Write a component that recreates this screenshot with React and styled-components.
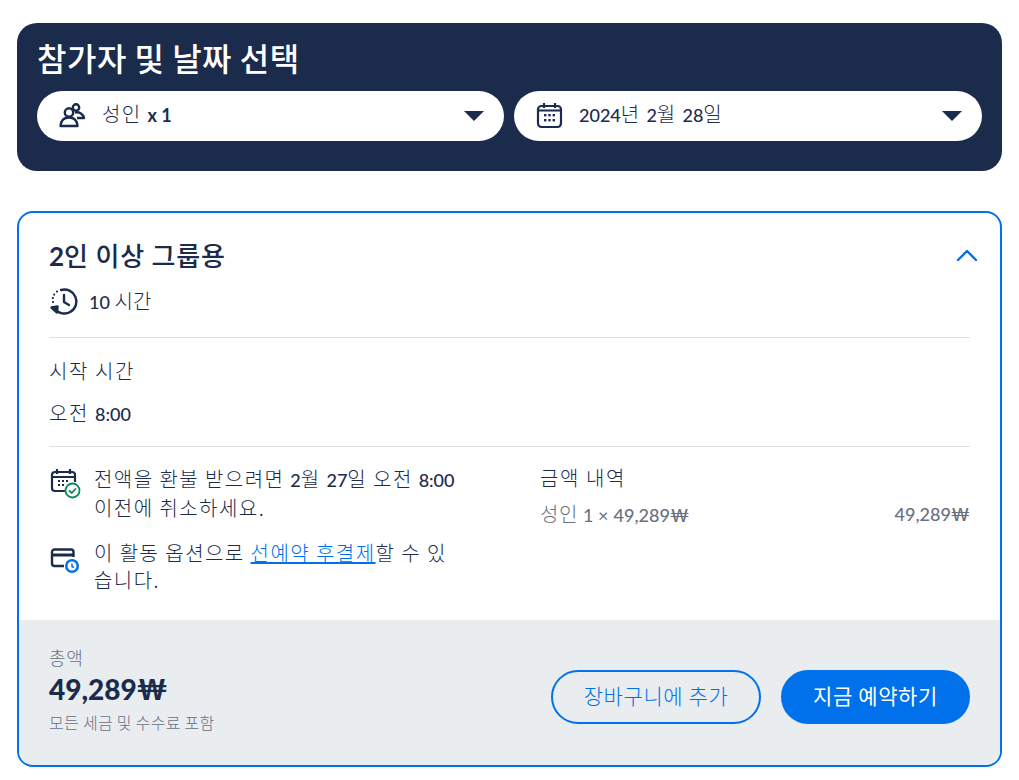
import React from "react";
import styled, { createGlobalStyle } from "styled-components";

const Global = createGlobalStyle`
  html, body { margin: 0; padding: 0; background: #fff; }
  body { font-family: "Noto Sans CJK KR", Lato, sans-serif; color: #1b2b4b; }
  * { box-sizing: border-box; }
`;
const Page = styled.div`
  padding: 23px 17px 0;
  display: flex;
  flex-direction: column;
  gap: 40px;
`;
const Num = styled.span`
  font-family: Lato, sans-serif;
  font-size: ${p => p.$size || 18}px;
  font-weight: ${p => p.$weight || 500};
  letter-spacing: 0;
`;
const Header = styled.section`
  height: 148px;
  background: #1b2b4b;
  border-radius: 20px;
  padding: 14px 20px 30px;
  display: flex;
  flex-direction: column;
`;
const Title = styled.h2`
  margin: 0;
  font-size: 32px;
  letter-spacing: 0.5px;
  line-height: 40px;
  height: 54px;
  font-weight: 500;
  color: #fff;
`;
const Selectors = styled.div`
  display: grid;
  grid-template-columns: 467px 468px;
  gap: 10px;
`;
const Pill = styled.div`
  height: 50px;
  background: #fff;
  border-radius: 25px;
  display: flex;
  align-items: center;
  padding: 0 20px 4px 21px;
  font-size: 20px;
  letter-spacing: 1.4px;
  font-weight: 300;
  color: #1b2b4b;
`;
const PillIcon = styled.svg`
  width: 28px;
  height: 28px;
  flex: none;
  margin-right: 16px;
  margin-top: 2px;
`;
const PillText = styled.span`
  flex: 1;
  line-height: 26px;
`;
const Caret = styled.span`
  width: 0;
  height: 0;
  border-left: 10px solid transparent;
  border-right: 10px solid transparent;
  border-top: 10px solid #1b2b4b;
  margin-top: 4px;
`;
const Card = styled.section`
  height: 556px;
  border: 2px solid #0070eb;
  border-radius: 16px;
  overflow: hidden;
  display: flex;
  flex-direction: column;
`;
const Body = styled.div`
  flex: 1;
  padding: 24px 30px 0;
  display: flex;
  flex-direction: column;
  font-weight: 300;
`;
const TitleRow = styled.div`
  display: flex;
  align-items: center;
  justify-content: space-between;
  height: 36px;
`;
const CardTitle = styled.h3`
  margin: 0;
  font-size: 26px;
  letter-spacing: 0.8px;
  line-height: 36px;
  font-weight: 500;
`;
const Chevron = styled.svg`
  margin: 0 -8px 0 0;
`;
const Duration = styled.div`
  display: flex;
  align-items: center;
  gap: 10px;
  height: 36px;
  margin-top: 10px;
  font-size: 20px;
  letter-spacing: 0.2px;
  line-height: 26px;
`;
const Divider = styled.hr`
  margin: ${p => p.$top}px 0 0;
  border: 0;
  border-top: 1px solid #dde1e6;
  width: 100%;
`;
const Label = styled.div`
  font-size: 20px;
  letter-spacing: 1.6px;
  line-height: 26px;
  margin-top: ${p => p.$top}px;
`;
const Columns = styled.div`
  display: grid;
  grid-template-columns: 491px 1fr;
  margin-top: 18px;
`;
const Notes = styled.div`
  display: flex;
  flex-direction: column;
  gap: 18px;
`;
const Note = styled.div`
  display: flex;
  gap: 13px;
  width: 414px;
  font-size: 20px;
  letter-spacing: 1.45px;
  line-height: 27px;
  word-break: break-all;
`;
const NoteIcon = styled.svg`
  width: 32px;
  height: 32px;
  flex: none;
  margin-top: ${p => p.$top}px;
`;
const Link = styled.a`
  color: #0070eb;
  text-decoration: underline;
`;
const Breakdown = styled.div`
  display: flex;
  flex-direction: column;
  margin-top: -1px;
`;
const BreakdownHead = styled.div`
  font-size: 20px;
  letter-spacing: 1.6px;
  line-height: 28px;
`;
const BreakdownRow = styled.div`
  display: flex;
  justify-content: space-between;
  margin-top: 8px;
  font-size: 20px;
  letter-spacing: 0.6px;
  line-height: 28px;
  color: #68707f;
`;
const Footer = styled.div`
  height: 145px;
  background: #e9edf0;
  padding: 25px 30px 0;
  display: flex;
  justify-content: space-between;
`;
const Totals = styled.div`
  display: flex;
  flex-direction: column;
`;
const TotalLabel = styled.div`
  font-size: 18px;
  letter-spacing: 0.8px;
  font-weight: 300;
  line-height: 25px;
  color: #68707f;
`;
const TotalValue = styled.div`
  font-family: Lato, sans-serif;
  font-size: 28px;
  line-height: 38px;
  font-weight: 900;
`;
const TotalNote = styled.div`
  font-size: 16px;
  letter-spacing: 0.3px;
  font-weight: 300;
  line-height: 28px;
  color: #68707f;
`;
const Actions = styled.div`
  display: flex;
  gap: 20px;
  margin-top: 25px;
  align-self: flex-start;
`;
const Button = styled.button`
  height: 54px;
  width: ${p => p.$w}px;
  border-radius: 27px;
  border: 2px solid #0070eb;
  background: ${p => p.$solid ? "#0070eb" : "transparent"};
  color: ${p => p.$solid ? "#fff" : "#0070eb"};
  font-family: inherit;
  font-size: 21px;
  letter-spacing: 0.6px;
  font-weight: ${p => p.$solid ? 400 : 300};
  padding: 0 0 4px;
`;

const Navy = "#1b2b4b";

export default function App() {
  return (
    <>
      <Global />
      <Page>
        <Header>
          <Title>참가자 및 날짜 선택</Title>
          <Selectors>
            <Pill>
              <PillIcon viewBox="0 0 28 28" fill="none" stroke={Navy} strokeWidth="2.4">
                <circle cx="11" cy="11.5" r="4.2" />
                <circle cx="18" cy="6.5" r="3.2" />
                <path d="M2.5 25 C3 19 6 16.5 11 16.5 C16 16.5 19 19 19.500 25 Z" strokeLinejoin="round" />
                <path d="M17 11.500 C21 10.500 25 12.500 26 17 L19 17" strokeLinejoin="round" />
              </PillIcon>
              <PillText>성인 <Num $weight={700}>x 1</Num></PillText>
              <Caret />
            </Pill>
            <Pill>
              <PillIcon viewBox="0 0 28 28" fill="none" stroke={Navy} strokeWidth="2.2">
                <rect x="3" y="5" width="23" height="21" rx="3.500" />
                <path d="M9 2v5M20 2v5M3 9.500h23" />
                <g fill={Navy} stroke="none">
                  <rect x="9" y="13" width="2.400" height="2.400" />
                  <rect x="13.300" y="13" width="2.400" height="2.400" />
                  <rect x="17.600" y="13" width="2.400" height="2.400" />
                  <rect x="9" y="18" width="2.400" height="2.400" />
                  <rect x="13.300" y="18" width="2.400" height="2.400" />
                  <rect x="17.600" y="18" width="2.400" height="2.400" />
                </g>
              </PillIcon>
              <PillText><Num>2024</Num>년 <Num>2</Num>월 <Num>28</Num>일</PillText>
              <Caret />
            </Pill>
          </Selectors>
        </Header>
        <Card>
          <Body>
            <TitleRow>
              <CardTitle><Num $size={26} $weight={700}>2</Num>인 이상 그룹용</CardTitle>
              <Chevron width="22" height="14" viewBox="0 0 22 14" fill="none" stroke="#0070eb" strokeWidth="2.400" strokeLinecap="round" strokeLinejoin="round">
                <path d="M2 12 L11 3 L20 12" />
              </Chevron>
            </TitleRow>
            <Duration>
              <svg width="30" height="30" viewBox="0 0 30 30" fill="none" stroke={Navy} strokeWidth="2.400" strokeLinecap="round" strokeLinejoin="round">
                <path d="M12 4 A12 12 0 1 1 6 23" />
                <path d="M15 9 V16 L20 19" />
                <path d="M2.500 21.500 L8.500 20.500 L8 26.500 Z" fill={Navy} />
                <path d="M4 16v.1M3.800 12v.1M5.200 8.500v.1M8 5.500v.1" strokeWidth="2.200" />
              </svg>
              <span><Num>10</Num> 시간</span>
            </Duration>
            <Divider $top={18} />
            <Label $top={20}>시작 시간</Label>
            <Label $top={16}>오전 <Num>8:00</Num></Label>
            <Divider $top={19} />
            <Columns>
              <Notes>
                <Note>
                  <NoteIcon $top={2} viewBox="0 0 32 32" fill="none" stroke={Navy} strokeWidth="2.200">
                    <path d="M17 24 H6 A3 3 0 0 1 3 21 V8 A3 3 0 0 1 6 5 H23 A3 3 0 0 1 26 8 V15" />
                    <path d="M8 2v5M21 2v5M3 10h23" />
                    <g fill={Navy} stroke="none">
                      <rect x="9" y="13" width="2" height="2" />
                      <rect x="13" y="13" width="2" height="2" />
                      <rect x="17" y="13" width="2" height="2" />
                      <rect x="9" y="17" width="2" height="2" />
                      <rect x="13" y="17" width="2" height="2" />
                    </g>
                    <circle cx="23.500" cy="23.500" r="7" fill="#fff" stroke="#0a8a5c" strokeWidth="1.800" />
                    <path d="M20 23.500 L22.700 26 L27 21.500" stroke="#0a8a5c" strokeWidth="1.800" />
                  </NoteIcon>
                  <span>전액을 환불 받으려면 <Num>2</Num>월 <Num>27</Num>일 오전 <Num>8:00</Num> 이전에 취소하세요.</span>
                </Note>
                <Note>
                  <NoteIcon $top={5} viewBox="0 0 32 32" fill="none" stroke={Navy} strokeWidth="2.400">
                    <path d="M15 22 H5.500 A2.500 2.500 0 0 1 3 19.500 V8 A2.500 2.500 0 0 1 5.500 5.500 H22 A2.500 2.500 0 0 1 24.500 8 V13" />
                    <path d="M3 11h21.500" strokeWidth="3" />
                    <circle cx="23" cy="22" r="7" fill="#0070eb" stroke="none" />
                    <circle cx="23" cy="22" r="4.500" fill="#fff" stroke="none" />
                    <path d="M23 19.500 V22.500 L25 23.500" stroke="#0070eb" strokeWidth="1.500" />
                  </NoteIcon>
                  <span>이 활동 옵션으로 <Link href="#">선예약 후결제</Link>할 수 있습니다.</span>
                </Note>
              </Notes>
              <Breakdown>
                <BreakdownHead>금액 내역</BreakdownHead>
                <BreakdownRow>
                  <span>성인 <Num $weight={400}>1 ×</Num> <Num>49,289₩</Num></span>
                  <Num>49,289₩</Num>
                </BreakdownRow>
              </Breakdown>
            </Columns>
          </Body>
          <Footer>
            <Totals>
              <TotalLabel>총액</TotalLabel>
              <TotalValue>49,289₩</TotalValue>
              <TotalNote>모든 세금 및 수수료 포함</TotalNote>
            </Totals>
            <Actions>
              <Button $w={210}>장바구니에 추가</Button>
              <Button $w={189} $solid>지금 예약하기</Button>
            </Actions>
          </Footer>
        </Card>
      </Page>
    </>
  );
}
